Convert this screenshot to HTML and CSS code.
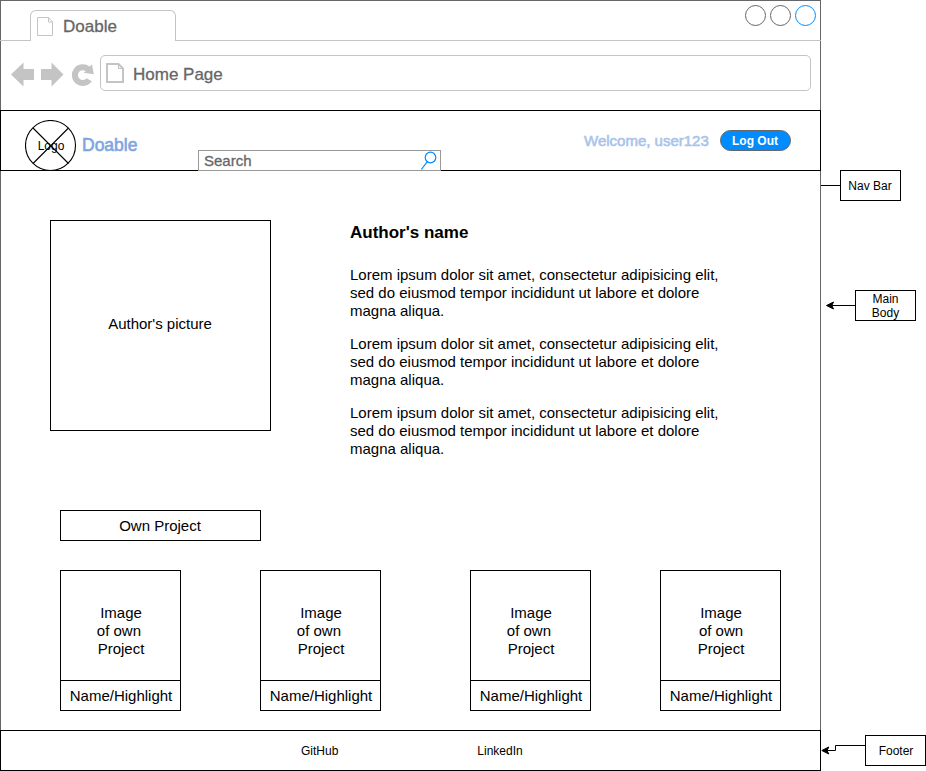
FILE: index.html
```html
<!DOCTYPE html>
<html lang="en">
<head>
<meta charset="utf-8">
<title>Doable</title>
<link rel="stylesheet" href="styles.css">
</head>
<body>
<div class="window">
  <header class="tabs">
    <div class="tab">
      <svg class="tab-icon" width="17" height="21" viewBox="0 0 17 21"><path d="M.5 1.500H11.500L15.500 6V19.500H.5ZM11.500 1.500V6H15.500"/></svg>
      <span>Doable</span>
    </div>
    <div class="controls"><i></i><i></i><i class="active"></i></div>
  </header>
  <div class="toolbar">
    <svg class="arrows" width="84" height="28" viewBox="0 0 84 28">
      <path d="M0 14.500L12.500 2.500V9H23V20H12.500V26.500Z"/>
      <path d="M52.500 14.500L40.500 2.500V9H30V20H40.500V26.500Z"/>
      <path d="M81 4.500L82.800 14.300L72.500 12.700L74.800 11.200A4.900 4.900 0 1 0 75.600 18.200L80.800 21.300A10.900 10.900 0 1 1 78.600 6.600Z"/>
    </svg>
    <div class="address">
      <svg class="page-icon" width="19" height="21" viewBox="0 0 19 21"><path d="M1 1H12.500L17 5.500V19H1Z"/><path class="fold" d="M12.500 1V5.500H17"/></svg>
      <span>Home Page</span>
    </div>
  </div>
  <nav class="navbar">
    <div class="logo">
      <svg width="52" height="52" viewBox="0 0 52 52"><circle cx="25.500" cy="25.500" r="25"/><path d="M8 8L43.500 43.500M43.500 8L8 43.500"/></svg>
      <span>Logo</span>
    </div>
    <span class="brand">Doable</span>
    <div class="search">
      <span>Search</span>
      <svg width="17" height="19" viewBox="0 0 17 19"><circle cx="10.500" cy="6.500" r="5.300"/><path d="M7.200 10.800L1.300 18.500"/></svg>
    </div>
    <span class="welcome">Welcome, user123</span>
    <span class="logout">Log Out</span>
  </nav>
  <main class="content">
    <section class="author">
      <div class="picture">Author's picture</div>
      <article class="bio">
        <h1>Author's name</h1>
        <p>Lorem ipsum dolor sit amet, consectetur adipisicing elit,<br>sed do eiusmod tempor incididunt ut labore et dolore<br>magna aliqua.</p>
        <p>Lorem ipsum dolor sit amet, consectetur adipisicing elit,<br>sed do eiusmod tempor incididunt ut labore et dolore<br>magna aliqua.</p>
        <p>Lorem ipsum dolor sit amet, consectetur adipisicing elit,<br>sed do eiusmod tempor incididunt ut labore et dolore<br>magna aliqua.</p>
      </article>
    </section>
    <h2 class="heading">Own Project</h2>
    <section class="projects">
      <div class="card"><div class="image">Image<br>of own&nbsp;<br>Project</div><div class="name">Name/Highlight</div></div>
      <div class="card"><div class="image">Image<br>of own&nbsp;<br>Project</div><div class="name">Name/Highlight</div></div>
      <div class="card"><div class="image">Image<br>of own&nbsp;<br>Project</div><div class="name">Name/Highlight</div></div>
      <div class="card"><div class="image">Image<br>of own<br>Project</div><div class="name">Name/Highlight</div></div>
    </section>
  </main>
  <footer class="footer"><span>GitHub</span><span>LinkedIn</span></footer>
</div>
<aside class="notes">
  <div class="note note-nav">
    <svg width="19" height="31" viewBox="0 0 19 31"><path class="line" d="M0 15.500H19"/></svg>
    <div class="label">Nav Bar</div>
  </div>
  <div class="note note-main">
    <svg width="34" height="31" viewBox="0 0 34 31"><path class="line" d="M10 15.500H34"/><path class="head" d="M5.500 15.500L12.500 12L10.800 15.500L12.500 19Z"/></svg>
    <div class="label">Main<br>Body</div>
  </div>
  <div class="note note-footer">
    <svg width="44" height="31" viewBox="0 0 44 31"><path class="line" d="M44 10.500H14.500V15.500H6"/><path class="head" d="M.8 15.500L7.800 12L6 15.500L7.800 19Z"/></svg>
    <div class="label">Footer</div>
  </div>
</aside>
</body>
</html>
```
FILE: styles.css
```css
* { box-sizing: border-box; }
body {
  margin: 0;
  display: flex;
  width: 926px;
  height: 771px;
  overflow: hidden;
  background: #fff;
  color: #000;
  font-family: "Liberation Sans", Arial, sans-serif;
  font-size: 15px;
}
svg { display: block; flex: none; fill: none; }

.window { width: 821px; height: 771px; flex: none; display: flex; flex-direction: column; }

.tabs {
  height: 41px;
  border-top: 1px solid #666;
  background: linear-gradient(#666, #666) 0 0 / 1px 39px no-repeat, linear-gradient(#666, #666) 100% 0 / 1px 39px no-repeat;
  border-bottom: 1px solid #c4c4c4;
  display: flex;
  justify-content: space-between;
  padding: 0 5px 0 30px;
}
.tab {
  width: 146px;
  height: 31px;
  margin-top: 9px;
  padding: 0 0 0 6px;
  display: flex;
  align-items: center;
  gap: 9px;
  border: 1px solid #c4c4c4;
  border-bottom: 0;
  border-radius: 6px 6px 0 0;
  background: #fff;
  color: #666;
  font-size: 17px;
  -webkit-text-stroke: 0.3px #666;
}
.tab span { padding-top: 1px; }
.tab-icon { stroke: #c4c4c4; }
.controls { display: flex; gap: 4px; padding-top: 4px; }
.controls i { width: 21px; height: 21px; border: 1px solid #666; border-radius: 50%; }
.controls .active { border-color: #008cff; }

.toolbar {
  height: 69px;
  border: solid #666;
  border-width: 0 1px;
  display: flex;
  padding: 14px 9px 0 10px;
}
.arrows { margin-top: 5px; fill: #c4c4c4; }
.address {
  width: 711px;
  height: 36px;
  margin-left: 5px;
  padding-left: 5px;
  display: flex;
  align-items: center;
  gap: 8px;
  border: 1px solid #c4c4c4;
  border-radius: 5px;
  color: #666;
  font-size: 17px;
  -webkit-text-stroke: 0.3px #666;
}
.address span { padding-top: 4px; }
.page-icon { stroke: #c4c4c4; stroke-width: 2; }
.page-icon .fold { stroke-width: 1.2; }

.navbar { height: 61px; border: 1px solid #000; display: flex; padding-left: 24px; }
.logo { width: 51px; height: 51px; margin-top: 9px; display: grid; place-items: center; font-size: 12px; }
.logo svg, .logo span { grid-area: 1 / 1; }
.logo svg { stroke: #000; stroke-width: 1.1; }
.brand { width: 117px; margin: 24px 0 0 6px; color: #7ea6e0; font-size: 17.5px; line-height: 20px; -webkit-text-stroke: 0.6px #7ea6e0; }
.search {
  width: 243px;
  height: 21px;
  margin: 39px 0 -1px -1px;
  padding: 0 3px 0 5px;
  display: flex;
  justify-content: space-between;
  align-items: center;
  border: 1px solid #999;
  background: #fff;
  color: #666;
  -webkit-text-stroke: 0.3px #666;
}
.search svg { stroke: #008cff; stroke-width: 1.2; }
.welcome { width: 136px; margin: 21px 0 0 143px; color: #a9c4eb; font-size: 15px; line-height: 18px; white-space: nowrap; -webkit-text-stroke: 0.6px #a9c4eb; }
.logout {
  width: 71px;
  height: 21px;
  margin-top: 19px;
  padding-right: 1px;
  border: 1px solid #666;
  border-radius: 11px;
  background: #008cff;
  color: #fff;
  font-size: 12px;
  font-weight: bold;
  line-height: 20px;
  text-align: center;
}

.content { height: 559px; border: solid #666; border-width: 0 1px; padding: 49px 39px 0 49px; }
.author { display: flex; gap: 79px; }
.picture { width: 221px; height: 211px; padding: 0 1px 5px 0; border: 1px solid #000; display: grid; place-items: center; }
.bio { width: 400px; height: 290px; white-space: nowrap; }
.bio h1 { margin: 3px 0 23px; font-size: 17px; line-height: 20px; }
.bio p { margin: 0 0 15px; line-height: 18px; }
.heading { width: 201px; height: 31px; margin: 0 0 29px 10px; padding-right: 1px; border: 1px solid #000; font-size: 15px; font-weight: normal; line-height: 30px; text-align: center; }
.projects { display: grid; grid-template-columns: 200px 210px 190px 121px; margin-left: 10px; }
.card { width: 121px; height: 141px; border: 1px solid #000; text-align: center; }
.image { height: 110px; padding: 33px 0 0 1px; border-bottom: 1px solid #000; line-height: 18px; }
.name { padding-left: 1px; line-height: 30px; }

.footer { height: 41px; border: 1px solid #000; display: flex; gap: 139px; padding-left: 300px; font-size: 12px; line-height: 40px; }

.notes { width: 105px; flex: none; font-size: 12px; }
.note { display: flex; height: 31px; }
.note svg { overflow: visible; }
.note-nav { margin-top: 170px; }
.note-nav .label { padding-right: 1px; }
.note-main { margin-top: 89px; }
.note-footer { margin-top: 414px; }
.note-footer .label { padding-left: 1px; }
.line { stroke: #000; }
.head { fill: #000; stroke: #000; stroke-linejoin: miter; }
.label { width: 61px; height: 31px; border: 1px solid #000; display: grid; place-items: center; line-height: 14px; text-align: center; }
```
